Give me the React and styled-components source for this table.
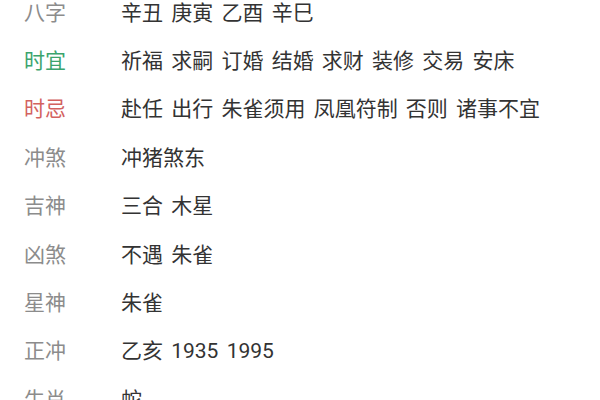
import React from 'react';
import styled, { createGlobalStyle } from 'styled-components';

const GlobalStyle = createGlobalStyle`
  html, body { margin: 0; padding: 0; background: #fff; overflow: hidden; }
  body { font-family: Roboto, "Noto Sans CJK SC", sans-serif; }
`;

const List = styled.div`
  display: flex; flex-direction: column; margin-top: -11px;
`;
const Row = styled.div`
  display: flex; align-items: center; height: 48.4px; padding-left: 24px;
`;
const Label = styled.span`
  width: 97px; flex-shrink: 0; font-size: 21px; line-height: 1;
  color: ${({ tone }) => tone === 'good' ? '#3ba46c' : tone === 'bad' ? '#d3625f' : '#8c8c8c'};
`;
const Value = styled.span`
  font-size: 21px; line-height: 1; color: #333; word-spacing: 3px; white-space: nowrap;
`;

const rows = [
  { label: '八字', value: '辛丑 庚寅 乙酉 辛巳' },
  { label: '时宜', value: '祈福 求嗣 订婚 结婚 求财 装修 交易 安床', tone: 'good' },
  { label: '时忌', value: '赴任 出行 朱雀须用 凤凰符制 否则 诸事不宜', tone: 'bad' },
  { label: '冲煞', value: '冲猪煞东' },
  { label: '吉神', value: '三合 木星' },
  { label: '凶煞', value: '不遇 朱雀' },
  { label: '星神', value: '朱雀' },
  { label: '正冲', value: '乙亥 1935 1995' },
  { label: '生肖', value: '蛇' },
];

export default function App() {
  return (
    <>
      <GlobalStyle />
      <List>
        {rows.map(r => (
          <Row key={r.label}>
            <Label tone={r.tone}>{r.label}</Label>
            <Value>{r.value}</Value>
          </Row>
        ))}
      </List>
    </>
  );
}
